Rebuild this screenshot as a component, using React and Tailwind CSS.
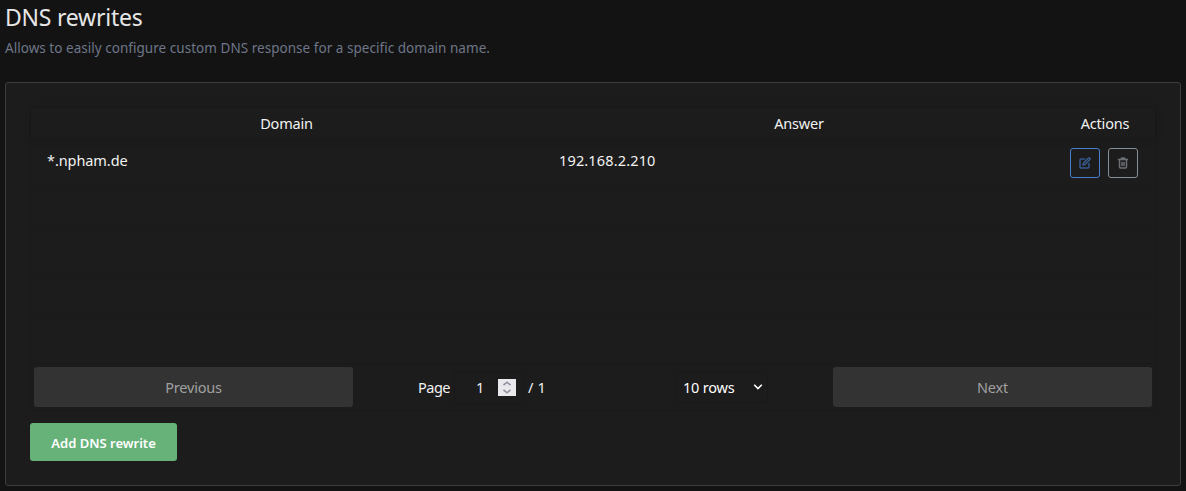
import React from 'react';

const columns = 'grid grid-cols-[513px_512px_100px]';

function EditIcon() {
  return (
    <svg width="12" height="12" viewBox="0 0 24 24" fill="none" stroke="currentColor" strokeWidth="3" strokeLinecap="round" strokeLinejoin="round">
      <path d="M11 4H4a2 2 0 0 0-2 2v14a2 2 0 0 0 2 2h14a2 2 0 0 0 2-2v-7" />
      <path d="M18.5 2.5a2.121 2.121 0 0 1 3 3L12 15l-4 1 1-4 9.5-9.5z" />
    </svg>
  );
}

function TrashIcon() {
  return (
    <svg width="12" height="12" viewBox="0 0 24 24" fill="none" stroke="currentColor" strokeWidth="3" strokeLinecap="round" strokeLinejoin="round">
      <path d="M3 5h18M19 6v14a2 2 0 0 1-2 2H7a2 2 0 0 1-2-2V6m3-1V4a2 2 0 0 1 2-2h4a2 2 0 0 1 2 2v1M10 11v6M14 11v6" />
    </svg>
  );
}

function Header() {
  return (
    <header className="h-[82px] pl-[5px]">
      <h1 className="h-9 text-[23px] leading-[35px] font-normal tracking-[-0.22px] text-[#e6e6e6]">DNS rewrites</h1>
      <p className="text-[13.5px] leading-6 tracking-[0.035px] text-[#6e7687]">
        Allows to easily configure custom DNS response for a specific domain name.
      </p>
    </header>
  );
}

function Table() {
  return (
    <div className="border border-[#191919]">
      <div className={`${columns} h-[30px] text-center leading-[30px] shadow-[0_2px_8px_0_rgba(0,0,0,0.12)]`}>
        <span className="pr-[2px]">Domain</span>
        <span className="pr-[2px]">Answer</span>
        <span className="pr-[2px]">Actions</span>
      </div>
      <div className={`${columns} h-[49px] border-b border-[#1a1a1a]`}>
        <span className="pt-[10px] pl-4 leading-6 tracking-[-0.08px]">*.npham.de</span>
        <span className="pt-[10px] pl-[15px] leading-6 tracking-[0.15px]">192.168.2.210</span>
        <div className="flex gap-2 pt-[10px] pl-[14px]">
          <button aria-label="Edit" className="flex size-[30px] items-center justify-center rounded-[3px] border border-[#467fcf] text-[#365a8f]">
            <EditIcon />
          </button>
          <button aria-label="Delete" className="flex size-[30px] items-center justify-center rounded-[3px] border border-[#868e96] text-[#6b6f74]">
            <TrashIcon />
          </button>
        </div>
      </div>
      <div className="h-[44px] border-b border-[#1a1a1a]" />
      <div className="h-[44px] border-b border-[#1a1a1a]" />
      <div className="h-[44px] border-b border-[#1a1a1a]" />
      <div className="h-[44px]" />
      <Pagination />
    </div>
  );
}

function Pagination() {
  return (
    <div className="flex h-[47px] items-center border-t border-[#191919] px-[3px] leading-6">
      <button className="h-10 w-[319px] rounded-[3px] bg-[#333] text-[#a0a0a0]">Previous</button>
      <div className="flex w-[480px] items-center">
        <span className="ml-[65px] w-[36px] tracking-[-0.5px]">Page</span>
        <div className="flex h-[33px] w-[70px] items-center rounded-[3px] border border-[#191919] pl-[21px]">
          <span className="w-[22px]">1</span>
          <span className="flex h-[17px] w-[18px] items-center justify-center bg-[#e9e9ed]">
            <svg width="10" height="13" viewBox="0 0 10 13" fill="none" stroke="#8f8f9d" strokeWidth="1.6">
              <path d="M1.5 4.2 5 1.2 8.5 4.2M1.5 8.8 5 11.8 8.5 8.8" />
            </svg>
          </span>
        </div>
        <span className="ml-1 tracking-[0.2px]">/ 1</span>
        <div className="mr-[65px] ml-auto flex h-[31px] w-[92px] items-center justify-between rounded-[3px] border border-[#191919] pr-1 pl-[6px] text-white">
          <span>10 rows</span>
          <svg width="10" height="8" viewBox="0 0 10 8" fill="none" stroke="#fff" strokeWidth="1.6">
            <path d="M1.2 1.8 5 5.6 8.8 1.8" />
          </svg>
        </div>
      </div>
      <button className="h-10 w-[319px] rounded-[3px] bg-[#333] text-[#a0a0a0]">Next</button>
    </div>
  );
}

export default function App() {
  return (
    <main className="h-[491px] w-[1186px] overflow-hidden bg-[#131313] font-['Noto_Sans','Open_Sans',sans-serif] text-[14.5px] tracking-[-0.2px] text-[#f2f2f2]">
      <Header />
      <section className="ml-[5px] h-[404px] w-[1176px] rounded-[3px] border border-[#3d3d3d] bg-[#1c1c1c] px-6 pt-6">
        <Table />
        <button className="mt-3 h-[38px] w-[147px] rounded-[3px] bg-[#67b279] pt-[3px] text-[13px] font-semibold tracking-[0px] text-white">
          Add DNS rewrite
        </button>
      </section>
    </main>
  );
}
